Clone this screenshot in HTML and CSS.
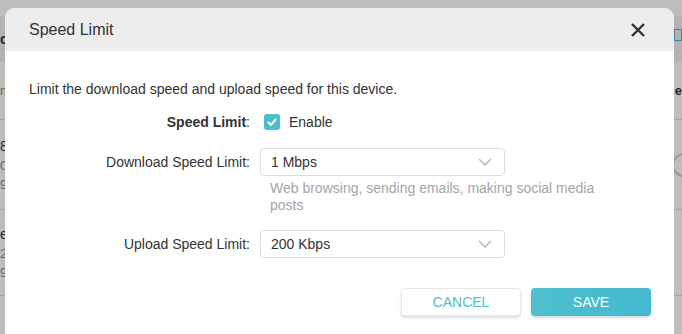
FILE: index.html
```html
<!DOCTYPE html>
<html lang="en">
<head>
  <meta charset="UTF-8">
  <title>Speed Limit</title>
  <link rel="stylesheet" href="styles.css">
</head>
<body>
  <!-- página de fondo (tabla de clientes) -->
  <div class="page">
    <div class="page-head">
      <span class="cell-left bold">c</span>
      <span class="head-mark"></span>
    </div>
    <div class="page-row row-1">
      <span class="cell-left">m</span>
      <span class="cell-right bold">e</span>
    </div>
    <div class="page-row row-2">
      <div class="cell-left stack">
        <span class="dark">8</span>
        <span>0</span>
        <span>9:</span>
      </div>
      <span class="toggle"></span>
    </div>
    <div class="page-row row-3">
      <div class="cell-left stack">
        <span class="dark">e</span>
        <span>2</span>
        <span>9:</span>
      </div>
    </div>
    <div class="page-row row-4"></div>
  </div>

  <div class="overlay"></div>

  <div class="modal">
    <div class="modal-header">
      <h2 class="modal-title">Speed Limit</h2>
      <button class="close-button" aria-label="Close">
        <svg width="14" height="14" viewBox="0 0 14 14">
          <path d="M1 1 L13 13 M13 1 L1 13" stroke="#333" stroke-width="2.4" fill="none"/>
        </svg>
      </button>
    </div>
    <div class="modal-body">
      <p class="modal-desc">Limit the download speed and upload speed for this device.</p>

      <div class="form-row row-enable">
        <label class="form-label"><b>Speed Limit</b>:</label>
        <div class="form-control">
          <span class="checkbox">
            <svg width="10" height="8" viewBox="0 0 10 8">
              <path d="M1 4 L4 7 L9 1" stroke="#fff" stroke-width="2" fill="none"/>
            </svg>
          </span>
          <span class="check-text">Enable</span>
        </div>
      </div>

      <div class="form-row row-download">
        <label class="form-label">Download Speed Limit:</label>
        <div class="select">
          <span>1 Mbps</span>
          <svg class="chevron" width="14" height="8" viewBox="0 0 14 8">
            <path d="M1 1 L7 7 L13 1" stroke="#bbb" stroke-width="1.6" fill="none"/>
          </svg>
        </div>
      </div>

      <div class="form-row row-hint">
        <span></span>
        <p class="hint">Web browsing, sending emails, making social media posts</p>
      </div>

      <div class="form-row row-upload">
        <label class="form-label">Upload Speed Limit:</label>
        <div class="select">
          <span>200 Kbps</span>
          <svg class="chevron" width="14" height="8" viewBox="0 0 14 8">
            <path d="M1 1 L7 7 L13 1" stroke="#bbb" stroke-width="1.6" fill="none"/>
          </svg>
        </div>
      </div>

      <div class="modal-actions">
        <button class="btn btn-cancel">CANCEL</button>
        <button class="btn btn-save">SAVE</button>
      </div>
    </div>
  </div>
</body>
</html>
```

FILE: styles.css
```css
body {
  margin: 0;
  font-family: 'Liberation Sans', Arial, sans-serif;
  background: #fff;
  height: 334px;
  overflow: hidden;
  color: #333;
}
.page {
  padding-top: 16px;
}
.page-head {
  height: 46px;
  background: #f2f2f2;
  display: flex;
  justify-content: space-between;
  align-items: center;
  font-size: 14px;
}
.head-mark {
  width: 8px;
  height: 12px;
  border: 1px solid #4bbfcc;
  margin: 0 0 8px 0;
  box-sizing: border-box;
}
.page-row {
  display: flex;
  justify-content: space-between;
  align-items: center;
  border-bottom: 1px solid #dcdcdc;
  font-size: 13px;
  color: #888;
}
.row-1 { height: 57px; }
.row-2 { height: 89px; }
.row-3 { height: 85px; }
.row-4 { height: 40px; border-bottom: none; }
.bold { font-weight: bold; color: #333; }
.dark { color: #333; font-size: 14px; }
.stack {
  display: flex;
  flex-direction: column;
  gap: 4px;
}
.toggle {
  width: 20px;
  height: 20px;
  border: 2px solid #ccc;
  border-radius: 50%;
  margin-right: -14px;
}
.overlay {
  position: fixed;
  inset: 0;
  background: rgba(0, 0, 0, 0.26);
}
.modal {
  position: absolute;
  left: 5px;
  top: 8px;
  width: 669px;
  height: 340px;
  background: #fff;
  border-radius: 10px 10px 0 0;
  overflow: hidden;
}
.modal-header {
  height: 43px;
  background: #ededed;
  display: flex;
  align-items: center;
  justify-content: space-between;
  padding: 0 29px 0 24px;
}
.modal-title {
  margin: 0;
  font-size: 16px;
  font-weight: normal;
  color: #333;
}
.close-button {
  background: none;
  border: none;
  padding: 0;
  display: flex;
  cursor: pointer;
}
.modal-body {
  padding: 30px 23px 0 24px;
  display: flex;
  flex-direction: column;
  font-size: 14px;
}
.modal-desc {
  margin: 0;
  line-height: 17px;
}
.form-row {
  display: grid;
  grid-template-columns: 221px 245px;
  column-gap: 10px;
  align-items: center;
}
.row-enable { margin-top: 14px; height: 20px; }
.row-download { margin-top: 16px; }
.row-hint { margin-top: 4px; grid-template-columns: 221px 350px; }
.row-upload { margin-top: 16px; }
.form-label {
  text-align: right;
  color: #333;
}
.form-control {
  display: flex;
  align-items: center;
  gap: 9px;
  padding-left: 4px;
}
.checkbox {
  width: 16px;
  height: 16px;
  border-radius: 3px;
  background: #4bbfcc;
  display: flex;
  align-items: center;
  justify-content: center;
}
.select {
  height: 28px;
  box-sizing: border-box;
  border: 1px solid #dcdcdc;
  border-radius: 4px;
  display: flex;
  align-items: center;
  justify-content: space-between;
  padding: 0 12px 0 10px;
}
.hint {
  margin: 0;
  padding-left: 10px;
  color: #a5a5a5;
  line-height: 17px;
}
.modal-actions {
  margin-top: 30px;
  display: flex;
  justify-content: flex-end;
  gap: 10px;
}
.btn {
  width: 120px;
  height: 28px;
  border-radius: 4px;
  font-family: inherit;
  font-size: 14px;
  cursor: pointer;
}
.btn-cancel {
  background: #fff;
  color: #4bbfcc;
  border: 1px solid #e8e8e8;
  box-shadow: 0 2px 3px rgba(0, 0, 0, 0.12);
}
.btn-save {
  background: linear-gradient(90deg, #4cc0cc, #45b9d0);
  color: #fff;
  border: none;
  box-shadow: 0 2px 3px rgba(0, 0, 0, 0.15);
}
```
